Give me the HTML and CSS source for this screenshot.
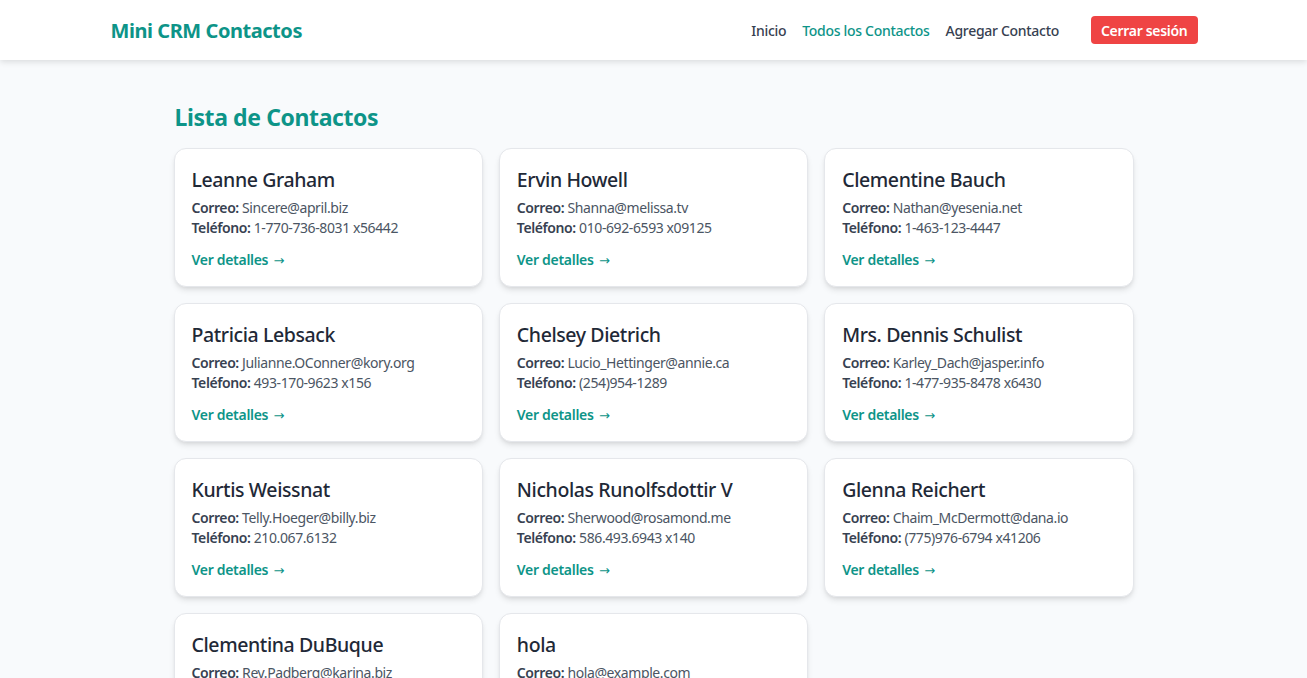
FILE: index.html
```html
<!DOCTYPE html>
<html lang="es">
<head>
<meta charset="utf-8">
<title>Mini CRM Contactos</title>
<link rel="stylesheet" href="styles.css">
</head>
<body>
<header class="navbar">
  <div class="nav-inner">
    <a class="brand" href="#">Mini CRM Contactos</a>
    <nav class="nav-links">
      <a href="#" class="nav-link">Inicio</a>
      <a href="#" class="nav-link active">Todos los Contactos</a>
      <a href="#" class="nav-link">Agregar Contacto</a>
      <button class="logout">Cerrar sesión</button>
    </nav>
  </div>
</header>
<main class="main">
  <h1 class="title">Lista de Contactos</h1>
  <div class="grid">
    <div class="card"><h2 class="name">Leanne Graham</h2><p class="row"><b>Correo:</b> Sincere@april.biz</p><p class="row"><b>Teléfono:</b> 1-770-736-8031 x56442</p><a class="details" href="#">Ver detalles <span class="arrow">→</span></a></div>
    <div class="card"><h2 class="name">Ervin Howell</h2><p class="row"><b>Correo:</b> Shanna@melissa.tv</p><p class="row"><b>Teléfono:</b> 010-692-6593 x09125</p><a class="details" href="#">Ver detalles <span class="arrow">→</span></a></div>
    <div class="card"><h2 class="name">Clementine Bauch</h2><p class="row"><b>Correo:</b> Nathan@yesenia.net</p><p class="row"><b>Teléfono:</b> 1-463-123-4447</p><a class="details" href="#">Ver detalles <span class="arrow">→</span></a></div>
    <div class="card"><h2 class="name">Patricia Lebsack</h2><p class="row"><b>Correo:</b> Julianne.OConner@kory.org</p><p class="row"><b>Teléfono:</b> 493-170-9623 x156</p><a class="details" href="#">Ver detalles <span class="arrow">→</span></a></div>
    <div class="card"><h2 class="name">Chelsey Dietrich</h2><p class="row"><b>Correo:</b> Lucio_Hettinger@annie.ca</p><p class="row"><b>Teléfono:</b> (254)954-1289</p><a class="details" href="#">Ver detalles <span class="arrow">→</span></a></div>
    <div class="card"><h2 class="name">Mrs. Dennis Schulist</h2><p class="row"><b>Correo:</b> Karley_Dach@jasper.info</p><p class="row"><b>Teléfono:</b> 1-477-935-8478 x6430</p><a class="details" href="#">Ver detalles <span class="arrow">→</span></a></div>
    <div class="card"><h2 class="name">Kurtis Weissnat</h2><p class="row"><b>Correo:</b> Telly.Hoeger@billy.biz</p><p class="row"><b>Teléfono:</b> 210.067.6132</p><a class="details" href="#">Ver detalles <span class="arrow">→</span></a></div>
    <div class="card"><h2 class="name">Nicholas Runolfsdottir V</h2><p class="row"><b>Correo:</b> Sherwood@rosamond.me</p><p class="row"><b>Teléfono:</b> 586.493.6943 x140</p><a class="details" href="#">Ver detalles <span class="arrow">→</span></a></div>
    <div class="card"><h2 class="name">Glenna Reichert</h2><p class="row"><b>Correo:</b> Chaim_McDermott@dana.io</p><p class="row"><b>Teléfono:</b> (775)976-6794 x41206</p><a class="details" href="#">Ver detalles <span class="arrow">→</span></a></div>
    <div class="card"><h2 class="name">Clementina DuBuque</h2><p class="row"><b>Correo:</b> Rey.Padberg@karina.biz</p><p class="row"><b>Teléfono:</b> 024-648-3804</p><a class="details" href="#">Ver detalles <span class="arrow">→</span></a></div>
    <div class="card"><h2 class="name">hola</h2><p class="row"><b>Correo:</b> hola@example.com</p><p class="row"><b>Teléfono:</b> 123456789</p><a class="details" href="#">Ver detalles <span class="arrow">→</span></a></div>
  </div>
</main>
</body>
</html>
```
FILE: styles.css
```css
* { box-sizing: border-box; }
html, body { margin: 0; padding: 0; }
body {
  font-family: "Noto Sans", "Open Sans", sans-serif;
  background: #f8fafc;
  color: #1f2937;
}
a { text-decoration: none; }
.navbar {
  background: #ffffff;
  height: 60px;
  box-shadow: 0 2px 6px rgba(0,0,0,0.12);
  position: relative;
  z-index: 1;
}
.nav-inner {
  max-width: 1152px;
  margin: 0 auto;
  padding: 0 32px;
  height: 100%;
  display: flex;
  align-items: center;
  justify-content: space-between;
}
.brand {
  color: #0d9488;
  font-size: 20px;
  font-weight: 700;
  letter-spacing: -0.45px;
  margin-left: 1px;
}
.nav-links {
  display: flex;
  align-items: center;
  gap: 16px;
}
.nav-link {
  color: #374151;
  font-size: 14px;
  font-weight: 500;
  letter-spacing: -0.3px;
}
.nav-link.active { color: #0d9488; }
.logout {
  margin-left: 16px;
  background: #ef4444;
  color: #fff;
  border: none;
  border-radius: 4px;
  height: 28px;
  padding: 0 10px;
  font-family: inherit;
  font-size: 14px;
  font-weight: 600;
  letter-spacing: -0.3px;
}
.main {
  max-width: 960px;
  margin: 0 auto;
  padding-top: 41px;
}
.title {
  margin: 0 0 15px 1px;
  color: #0d9488;
  font-size: 23px;
  line-height: 32px;
  font-weight: 700;
  letter-spacing: -0.4px;
}
.grid {
  display: grid;
  grid-template-columns: repeat(3, 1fr);
  gap: 16px 16px;
}
.card {
  background: #fff;
  border: 1px solid #e5e7eb;
  border-radius: 12px;
  padding: 17px 16px 15px 17px;
  box-shadow: 0 4px 6px -1px rgba(0,0,0,0.1), 0 2px 4px -2px rgba(0,0,0,0.1);
}
.name {
  margin: 0 0 4px;
  font-size: 19.5px;
  line-height: 28px;
  font-weight: 500;
  letter-spacing: -0.4px;
  color: #1f2937;
}
.row {
  margin: 0;
  font-size: 14px;
  line-height: 20px;
  color: #4b5563;
  letter-spacing: -0.4px;
}
.row b { color: #374151; font-weight: 600; }
.details {
  display: inline-block;
  margin-top: 12px;
  color: #0d9488;
  font-size: 14px;
  line-height: 20px;
  font-weight: 600;
  letter-spacing: -0.3px;
}
.arrow {
  font-family: "DejaVu Sans", sans-serif;
  font-size: 13px;
  font-weight: 400;
  letter-spacing: 0;
  margin-left: 2px;
}
```
